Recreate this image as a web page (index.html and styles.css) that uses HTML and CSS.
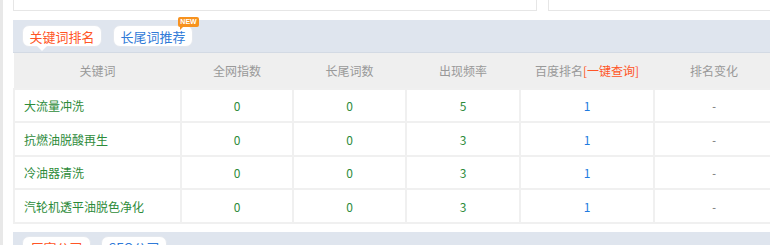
FILE: index.html
```html
<!DOCTYPE html>
<html lang="zh">
<head>
<meta charset="utf-8">
<title>关键词排名</title>
<link rel="stylesheet" href="styles.css">
</head>
<body>
<div class="page">
  <div class="strip"></div>
  <div class="main">
    <div class="top">
      <div class="card card-a"></div>
      <div class="card card-b"></div>
    </div>

    <div class="band">
      <div class="tab tab-red tab-active">关键词排名</div>
      <div class="tab tab-blue">长尾词推荐<span class="badge">NEW</span></div>
    </div>

    <table class="kw">
      <colgroup>
        <col class="c1"><col class="c2"><col class="c3"><col class="c4"><col class="c5"><col class="c6">
      </colgroup>
      <thead>
        <tr>
          <th>关键词</th>
          <th>全网指数</th>
          <th>长尾词数</th>
          <th>出现频率</th>
          <th>百度排名<span class="query">[一键查询]</span></th>
          <th>排名变化</th>
        </tr>
      </thead>
      <tbody>
        <tr class="r1"><td class="name">大流量冲洗</td><td class="num">0</td><td class="num">0</td><td class="num">5</td><td class="rank">1</td><td class="chg">-</td></tr>
        <tr class="r2"><td class="name">抗燃油脱酸再生</td><td class="num">0</td><td class="num">0</td><td class="num">3</td><td class="rank">1</td><td class="chg">-</td></tr>
        <tr class="r1"><td class="name">冷油器清洗</td><td class="num">0</td><td class="num">0</td><td class="num">3</td><td class="rank">1</td><td class="chg">-</td></tr>
        <tr class="r2"><td class="name">汽轮机透平油脱色净化</td><td class="num">0</td><td class="num">0</td><td class="num">3</td><td class="rank">1</td><td class="chg">-</td></tr>
      </tbody>
    </table>

    <div class="band band-bottom">
      <div class="tab tab-red tab-small-a">厂家公司</div>
      <div class="tab tab-blue tab-small-b">SEO公司</div>
    </div>
  </div>
</div>
</body>
</html>
```

FILE: styles.css
```css
html, body {
  margin: 0;
  padding: 0;
  overflow: hidden;
  background: #fff;
  font-family: "Noto Sans CJK SC", "Liberation Sans", sans-serif;
}

.page {
  display: flex;
  width: 800px;
  height: 245px;
  overflow: hidden;
}

.strip {
  width: 3px;
  flex: none;
  background: #e8e8e8;
}

.main {
  flex: 1;
  padding-left: 10px;
}

.top {
  display: flex;
  gap: 11px;
  height: 11px;
}

.card {
  height: 10px;
  border: 1px solid #e6e6e6;
  border-top: none;
  background: #fff;
}

.card-a { width: 522px; }
.card-b { flex: 1; }

.band {
  margin-top: 9px;
  background: #dfe5ee;
  border-bottom: 1px solid #d3dae4;
  display: flex;
  align-items: flex-start;
  gap: 11px;
  padding: 5px 0 0 9px;
  box-sizing: border-box;
  height: 33px;
}

.tab {
  position: relative;
  height: 22px;
  line-height: 21px;
  padding: 0;
  background: #fff;
  border: 1px solid #e4e8ee;
  border-radius: 7px;
  font-size: 13px;
  box-sizing: border-box;
  width: 80px;
  text-align: center;
  white-space: nowrap;
}

.tab-red { color: #ff5526; }
.tab-blue { color: #2f7ad8; }

.tab-active::after {
  content: "";
  position: absolute;
  left: 14px;
  bottom: -5px;
  border-left: 5px solid transparent;
  border-right: 5px solid transparent;
  border-top: 5px solid #fff;
}

.badge {
  position: absolute;
  top: -9px;
  right: -7px;
  width: 21px;
  height: 10px;
  line-height: 10px;
  background: #f7921e;
  color: #fff;
  font-family: "Liberation Sans", sans-serif;
  font-size: 7px;
  font-weight: bold;
  border-radius: 2px;
  text-align: center;
}

.badge::after {
  content: "";
  position: absolute;
  left: 2px;
  bottom: -3px;
  border-left: 3px solid #f7921e;
  border-bottom: 3px solid transparent;
}

table.kw {
  border-collapse: collapse;
  table-layout: fixed;
  width: 760px;
  font-size: 12px;
}

col.c1 { width: 167px; }
col.c2 { width: 112px; }
col.c3 { width: 113px; }
col.c4 { width: 114px; }
col.c5 { width: 134px; }
col.c6 { width: 120px; }

.kw th {
  height: 35px;
  padding: 0;
  background: #efefef;
  color: #999;
  font-weight: normal;
  text-align: center;
}

.kw td {
  padding: 0;
  border: 2px solid #f0f0f0;
  text-align: center;
}

.kw tr.r1 td { height: 31px; }
.kw tr.r2 td { height: 32px; }

.query { color: #ff5526; }

.kw td.name {
  text-align: left;
  padding-left: 9px;
  color: #2d8b3a;
}

.kw td.num { color: #2d8b3a; }
.kw td.rank { color: #1f7be0; }
.kw td.chg { color: #888; font-weight: bold; font-size: 10px; }

.band-bottom {
  margin-top: 8px;
  padding-top: 4px;
  height: 40px;
  border-bottom: none;
  gap: 10px;
}

.tab-small-a { width: 69px; }
.tab-small-b { width: 66px; }
```
